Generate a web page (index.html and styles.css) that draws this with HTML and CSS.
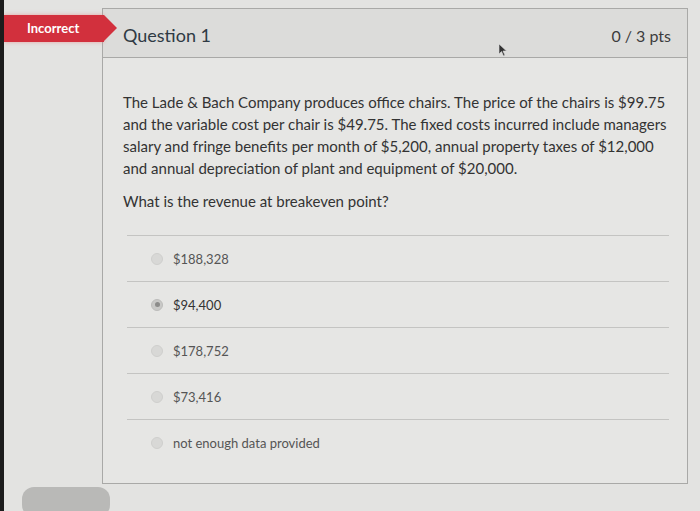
FILE: index.html
```html
<!DOCTYPE html>
<html lang="en">
<head>
<meta charset="utf-8">
<title>Question 1</title>
<link rel="stylesheet" href="styles.css">
</head>
<body>
<div class="page">
  <div class="row">
    <div class="side">
      <div class="badge">Incorrect</div>
    </div>
    <div class="question">
      <div class="qhead">
        <span class="qtitle">Question 1</span>
        <span class="pts">0 / 3 pts</span>
        <svg class="cursor" width="10" height="14" viewBox="0 0 10 14"><path d="M1 1 L1 11 L3.5 8.5 L5.5 13 L7 12.3 L5 8 L8.5 8 Z" fill="#333" stroke="#ddd" stroke-width="0.6"/></svg>
      </div>
      <div class="qbody">
        <p class="text">The Lade &amp; Bach Company produces office chairs. The price of the chairs is $99.75 and the variable cost per chair is $49.75. The fixed costs incurred include managers salary and fringe benefits per month of $5,200, annual property taxes of $12,000 and annual depreciation of plant and equipment of $20,000.</p>
        <p class="text ask">What is the revenue at breakeven point?</p>
        <div class="answers">
          <div class="ans"><span class="radio"></span><span>$188,328</span></div>
          <div class="ans"><span class="radio checked"></span><span class="sel">$94,400</span></div>
          <div class="ans"><span class="radio"></span><span>$178,752</span></div>
          <div class="ans"><span class="radio"></span><span>$73,416</span></div>
          <div class="ans"><span class="radio"></span><span>not enough data provided</span></div>
        </div>
      </div>
    </div>
  </div>
  <div class="btn"></div>
</div>
</body>
</html>
```

FILE: styles.css
```css
* { box-sizing: border-box; }
html, body { margin: 0; padding: 0; }
body {
  background: #e3e3e1;
  font-family: Lato, "Noto Sans", sans-serif;
  width: 700px;
  height: 511px;
  overflow: hidden;
  border-left: 4px solid #1c1c1c;
}
.page {
  display: flex;
  flex-direction: column;
  padding-top: 8px;
}
.row {
  display: flex;
}
.side {
  width: 98px;
  padding-top: 7px;
}
.badge {
  position: relative;
  width: 100px;
  height: 27px;
  background: #d2303d;
  color: #fff;
  font-weight: 700;
  font-size: 13px;
  line-height: 27px;
  padding-left: 23px;
  box-shadow: 0 0 4px rgba(230,120,120,0.6);
  z-index: 2;
}
.badge::after {
  content: "";
  position: absolute;
  right: -13px;
  top: 0;
  border-top: 13.5px solid transparent;
  border-bottom: 13.5px solid transparent;
  border-left: 13px solid #d2303d;
}
.question {
  width: 586px;
  border: 1.5px solid #a9a9a7;
  background: #e6e6e4;
}
.qhead {
  position: relative;
  height: 49px;
  background: #dcdcda;
  border-bottom: 1.5px solid #a9a9a7;
  display: flex;
  align-items: center;
  justify-content: space-between;
  padding: 4px 16px 0 20px;
}
.qtitle {
  font-size: 18px;
  color: #2f3a44;
}
.pts {
  font-size: 16px;
  color: #3d3d3d;
}
.cursor {
  position: absolute;
  left: 395px;
  top: 34px;
}
.qbody {
  padding: 33px 18px 18px 20px;
}
.text {
  margin: 0;
  font-size: 15px;
  line-height: 22px;
  color: #333;
}
.ask {
  margin-top: 11px;
}
.answers {
  margin-top: 23px;
  margin-left: 4px;
}
.ans {
  height: 46px;
  border-top: 1.5px solid #c4c4c2;
  display: flex;
  align-items: center;
  padding-left: 24px;
  font-size: 13px;
  color: #555;
}
.radio {
  width: 12px;
  height: 12px;
  border-radius: 50%;
  background: #d8d8d6;
  border: 1px solid #cfcfcd;
  margin-right: 10px;
  display: flex;
  align-items: center;
  justify-content: center;
}
.radio.checked {
  background: #c9c9c7;
  border-color: #bdbdbb;
}
.radio.checked::after {
  content: "";
  width: 5px;
  height: 5px;
  border-radius: 50%;
  background: #8c8c8a;
}
.sel { color: #333; }
.btn {
  width: 88px;
  height: 30px;
  margin-left: 18px;
  margin-top: 3px;
  background: #b9b9b7;
  border-radius: 12px;
}
```
